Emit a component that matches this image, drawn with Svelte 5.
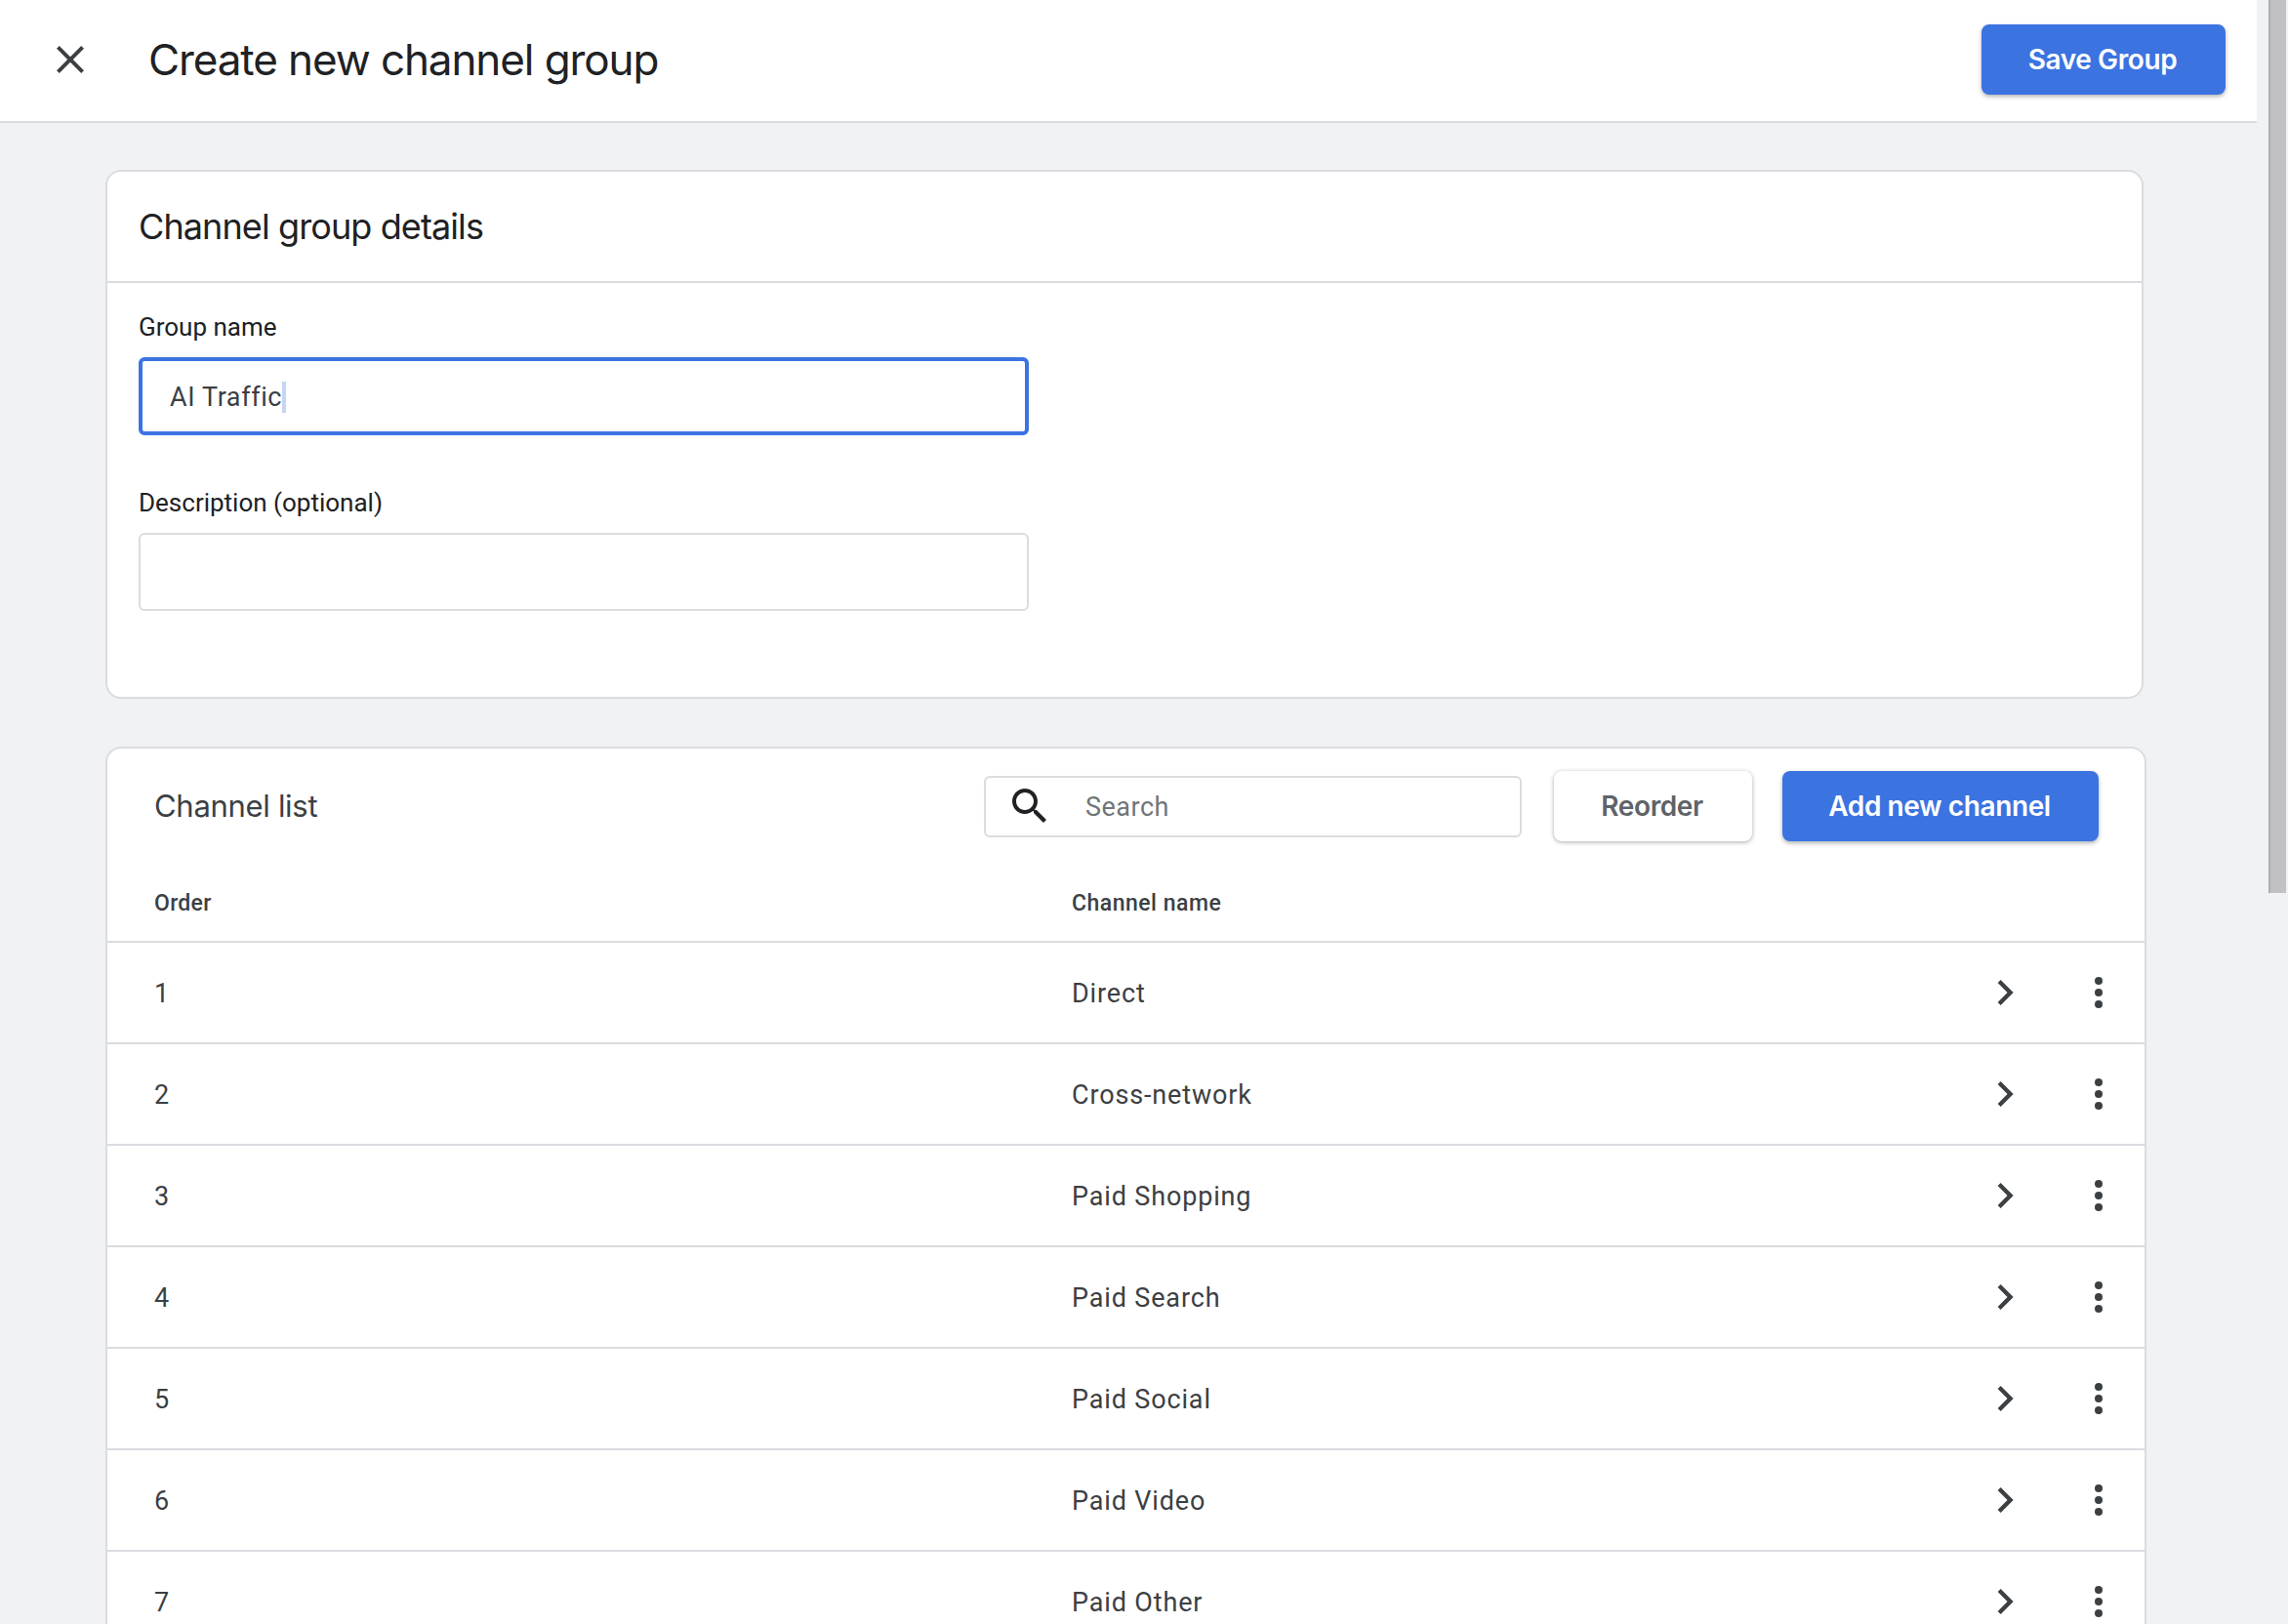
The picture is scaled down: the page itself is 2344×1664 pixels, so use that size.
<script>
  const channels = [
    'Direct',
    'Cross-network',
    'Paid Shopping',
    'Paid Search',
    'Paid Social',
    'Paid Video',
    'Paid Other'
  ];
</script>

<div class="page">
  <div class="main">
    <header class="topbar">
      <svg class="close" viewBox="0 0 24 24" aria-label="Close">
        <path d="M19 6.41 17.59 5 12 10.59 6.41 5 5 6.41 10.59 12 5 17.59 6.41 19 12 13.41 17.59 19 19 17.59 13.41 12z" />
      </svg>
      <h1>Create new channel group</h1>
      <button class="primary save">Save Group</button>
    </header>

    <div class="content">
      <section class="card details">
        <div class="card-head">
          <h2>Channel group details</h2>
        </div>
        <div class="form">
          <div class="label">Group name</div>
          <div class="field focused">AI Traffic<span class="caret"></span></div>
          <div class="label second">Description (optional)</div>
          <input class="field" type="text" />
        </div>
      </section>

      <section class="card list">
        <div class="list-head">
          <h3>Channel list</h3>
          <div class="search">
            <svg viewBox="0 0 24 24">
              <path d="M15.5 14h-.79l-.28-.27C15.41 12.59 16 11.11 16 9.5 16 5.91 13.09 3 9.5 3S3 5.91 3 9.5 5.91 16 9.5 16c1.61 0 3.09-.59 4.23-1.57l.27.28v.79l5 4.99L20.49 19l-4.99-5zm-6 0C7.01 14 5 11.99 5 9.5S7.01 5 9.5 5 14 7.01 14 9.5 11.99 14 9.5 14z" />
            </svg>
            <input type="text" placeholder="Search" />
          </div>
          <button class="secondary">Reorder</button>
          <button class="primary add">Add new channel</button>
        </div>

        <div class="row columns">
          <div class="order">Order</div>
          <div class="name">Channel name</div>
        </div>

        {#each channels as channel, i}
          <div class="row">
            <div class="order">{i + 1}</div>
            <div class="name">{channel}</div>
            <svg class="chevron" viewBox="0 0 24 24">
              <path d="M10 6 8.59 7.41 13.17 12l-4.58 4.59L10 18l6-6z" />
            </svg>
            <svg class="more" viewBox="0 0 32 32">
              <circle cx="16" cy="4" r="4" />
              <circle cx="16" cy="16" r="4" />
              <circle cx="16" cy="28" r="4" />
            </svg>
          </div>
        {/each}
      </section>
    </div>
  </div>

  <aside class="scrollbar">
    <div class="thumb"></div>
  </aside>
</div>

<style>
  :global(body) {
    overflow: hidden;
    background: #f1f2f4;
  }

  .page {
    display: flex;
    height: 100vh;
    overflow: hidden;
    font-family: Roboto, "Liberation Sans", sans-serif;
    color: #3c4043;
  }

  .main {
    width: 2312px;
    flex-shrink: 0;
  }

  .topbar {
    display: flex;
    align-items: center;
    box-sizing: border-box;
    height: 126px;
    padding: 0 32px 2px 48px;
    background: #fff;
    border-bottom: 2px solid #dadce0;
  }

  .close {
    width: 48px;
    height: 48px;
    fill: #3c4043;
  }

  h1 {
    margin: 0 auto 0 56px;
    font-family: Inter, sans-serif;
    font-size: 44px;
    font-weight: 400;
    letter-spacing: -1.1px;
    color: #202124;
  }

  button {
    box-sizing: border-box;
    height: 72px;
    padding: 0 2px 0 0;
    border: none;
    border-radius: 8px;
    font-family: Inter, sans-serif;
    font-size: 28px;
    font-weight: 600;
    letter-spacing: -0.4px;
    cursor: pointer;
  }

  .primary {
    background: #3b73e1;
    color: #fff;
    box-shadow: 0 2px 4px rgba(60, 64, 67, 0.4);
  }

  .save {
    width: 250px;
  }

  .add {
    width: 324px;
  }

  .secondary {
    width: 203px;
    background: #fff;
    color: #5f6368;
    box-shadow: 0 1px 4px rgba(60, 64, 67, 0.45);
  }

  .content {
    display: flex;
    flex-direction: column;
    gap: 49px;
    padding: 48px 0 0 108px;
  }

  .card {
    box-sizing: border-box;
    background: #fff;
    border: 2px solid #dadce0;
    border-radius: 16px;
  }

  .details {
    width: 2088px;
    height: 542px;
  }

  .card-head {
    display: flex;
    align-items: center;
    box-sizing: border-box;
    height: 114px;
    padding: 0 32px 1px;
    border-bottom: 2px solid #dadce0;
  }

  h2 {
    margin: 0;
    font-family: Inter, sans-serif;
    font-size: 36px;
    font-weight: 400;
    letter-spacing: -0.9px;
    color: #202124;
  }

  .form {
    padding: 30px 32px 0;
  }

  .label {
    margin-bottom: 16px;
    font-size: 26px;
    line-height: 30px;
    color: #202124;
  }

  .second {
    margin-top: 54px;
  }

  .field {
    display: flex;
    align-items: center;
    box-sizing: border-box;
    width: 912px;
    height: 80px;
    padding: 0 28px;
    border: 2px solid #dadce0;
    border-radius: 6px;
    background: #fff;
    font-family: Roboto, sans-serif;
    font-size: 27px;
    letter-spacing: 0.6px;
    color: #3c4043;
    outline: none;
  }

  .focused {
    border: 4px solid #3b73e1;
    padding: 2px 27px 0 28px;
  }

  .caret {
    width: 4px;
    height: 32px;
    background: #c5d5f5;
  }

  .list {
    width: 2091px;
    height: 1000px;
  }

  .list-head {
    display: flex;
    align-items: center;
    padding: 23px 47px 0 48px;
  }

  h3 {
    margin: 0 auto 2px 0;
    font-family: Inter, sans-serif;
    font-size: 31px;
    font-weight: 400;
    letter-spacing: -0.3px;
    color: #3c4043;
  }

  .search {
    display: flex;
    align-items: center;
    box-sizing: border-box;
    width: 551px;
    height: 63px;
    margin-right: 33px;
    padding-left: 21px;
    border: 2px solid #dadce0;
    border-radius: 6px;
  }

  .search svg {
    width: 48px;
    height: 48px;
    flex-shrink: 0;
    fill: #202124;
  }

  .search input {
    flex: 1;
    min-width: 0;
    margin-left: 33px;
    padding: 2px 0 0;
    border: none;
    outline: none;
    font-family: Roboto, sans-serif;
    font-size: 27px;
    letter-spacing: 0.5px;
  }

  .search input::placeholder {
    color: #70757a;
    opacity: 1;
  }

  .list-head .secondary {
    margin-right: 31px;
  }

  .row {
    display: flex;
    align-items: center;
    box-sizing: border-box;
    height: 104px;
    padding: 0 31px 0 48px;
    border-bottom: 2px solid #dadce0;
    font-size: 27px;
    color: #3c4043;
  }

  .columns {
    padding-top: 24px;
    font-size: 23px;
    font-weight: 500;
  }

  .order {
    width: 940px;
    flex-shrink: 0;
    padding-top: 1px;
  }

  .name {
    flex: 1;
    padding-top: 1px;
    letter-spacing: 0.85px;
  }

  .columns .order {
    letter-spacing: 0.3px;
  }

  .columns .name {
    letter-spacing: 0.5px;
  }

  .chevron {
    width: 52px;
    height: 52px;
    fill: #3c4043;
  }

  .more {
    width: 32px;
    height: 32px;
    margin-left: 54px;
    fill: #3c4043;
  }

  .scrollbar {
    box-sizing: border-box;
    width: 32px;
    padding: 0 2px 0 12px;
  }

  .thumb {
    height: 915px;
    background: #c1c1c3;
    border-left: 2px solid #adadaf;
    box-sizing: border-box;
  }
</style>
